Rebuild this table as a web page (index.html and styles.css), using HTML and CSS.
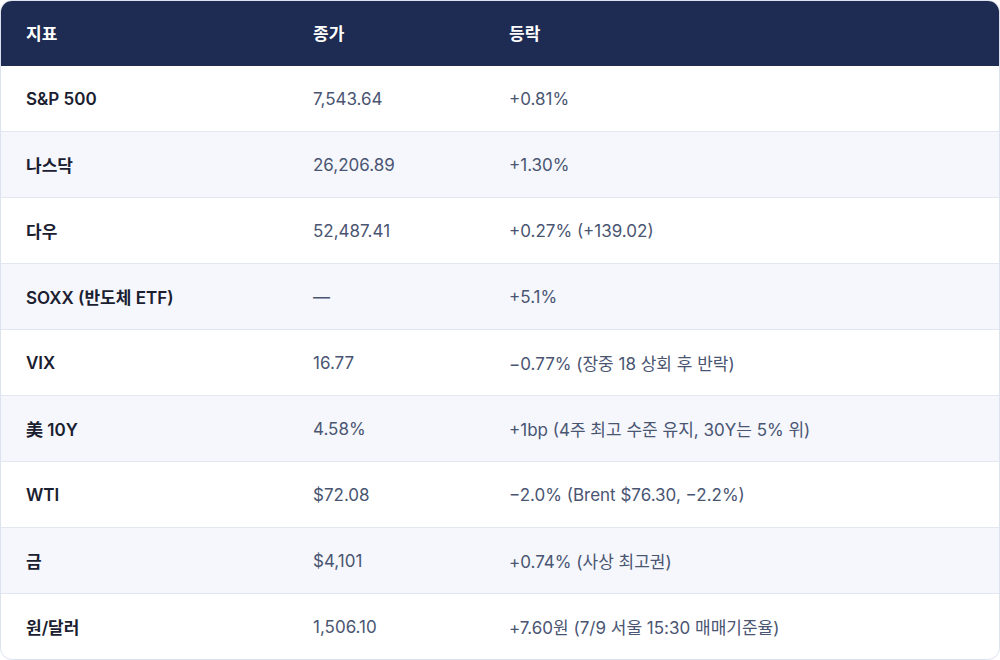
FILE: index.html
```html
<!DOCTYPE html>
<html lang="ko">
<head>
<meta charset="utf-8">
<link rel="stylesheet" href="styles.css">
</head>
<body>
<div class="card">
  <table class="tbl">
    <colgroup><col class="c1"><col class="c2"><col class="c3"></colgroup>
    <thead>
      <tr><th>지표</th><th>종가</th><th>등락</th></tr>
    </thead>
    <tbody>
      <tr><td>S&amp;P 500</td><td>7,543.64</td><td>+0.81%</td></tr>
      <tr><td>나스닥</td><td>26,206.89</td><td>+1.30%</td></tr>
      <tr><td>다우</td><td>52,487.41</td><td>+0.27% (+139.02)</td></tr>
      <tr><td>SOXX (반도체 ETF)</td><td>—</td><td>+5.1%</td></tr>
      <tr><td>VIX</td><td>16.77</td><td>−0.77% (장중 18 상회 후 반락)</td></tr>
      <tr><td>美 10Y</td><td>4.58%</td><td>+1bp (4주 최고 수준 유지, 30Y는 5% 위)</td></tr>
      <tr><td>WTI</td><td>$72.08</td><td>−2.0% (Brent $76.30, −2.2%)</td></tr>
      <tr><td>금</td><td>$4,101</td><td>+0.74% (사상 최고권)</td></tr>
      <tr><td>원/달러</td><td>1,506.10</td><td>+7.60원 (7/9 서울 15:30 매매기준율)</td></tr>
    </tbody>
  </table>
</div>
</body>
</html>
```
FILE: styles.css
```css
html, body {
  margin: 0;
  padding: 0;
  background: #ffffff;
}
body {
  font-family: Inter, "Noto Sans CJK KR", sans-serif;
  width: 1000px;
  height: 660px;
}
.card {
  box-sizing: border-box;
  width: 1000px;
  height: 660px;
  border: 1px solid #dde3ee;
  border-radius: 12px;
  overflow: hidden;
}
.tbl {
  width: 100%;
  border-collapse: separate;
  border-spacing: 0;
  table-layout: fixed;
}
.c1 { width: 287px; }
.c2 { width: 196px; }
.tbl th {
  background: #1e2b52;
  color: #ffffff;
  font-weight: 700;
  font-size: 17px;
  text-align: left;
  height: 65px;
  padding: 0 0 3px 25px;
  box-sizing: border-box;
}
.tbl td {
  height: 66px;
  padding: 0 0 0 25px;
  box-sizing: border-box;
  font-size: 17px;
  color: #4a5572;
  border-top: 1px solid #e2e7f1;
}
.tbl tbody tr:first-child td { border-top: none; height: 65px; }
.tbl tbody tr:nth-child(even) td { background: #f5f7fc; }
.tbl td:first-child {
  font-weight: 600;
  color: #1a2030;
}
```
